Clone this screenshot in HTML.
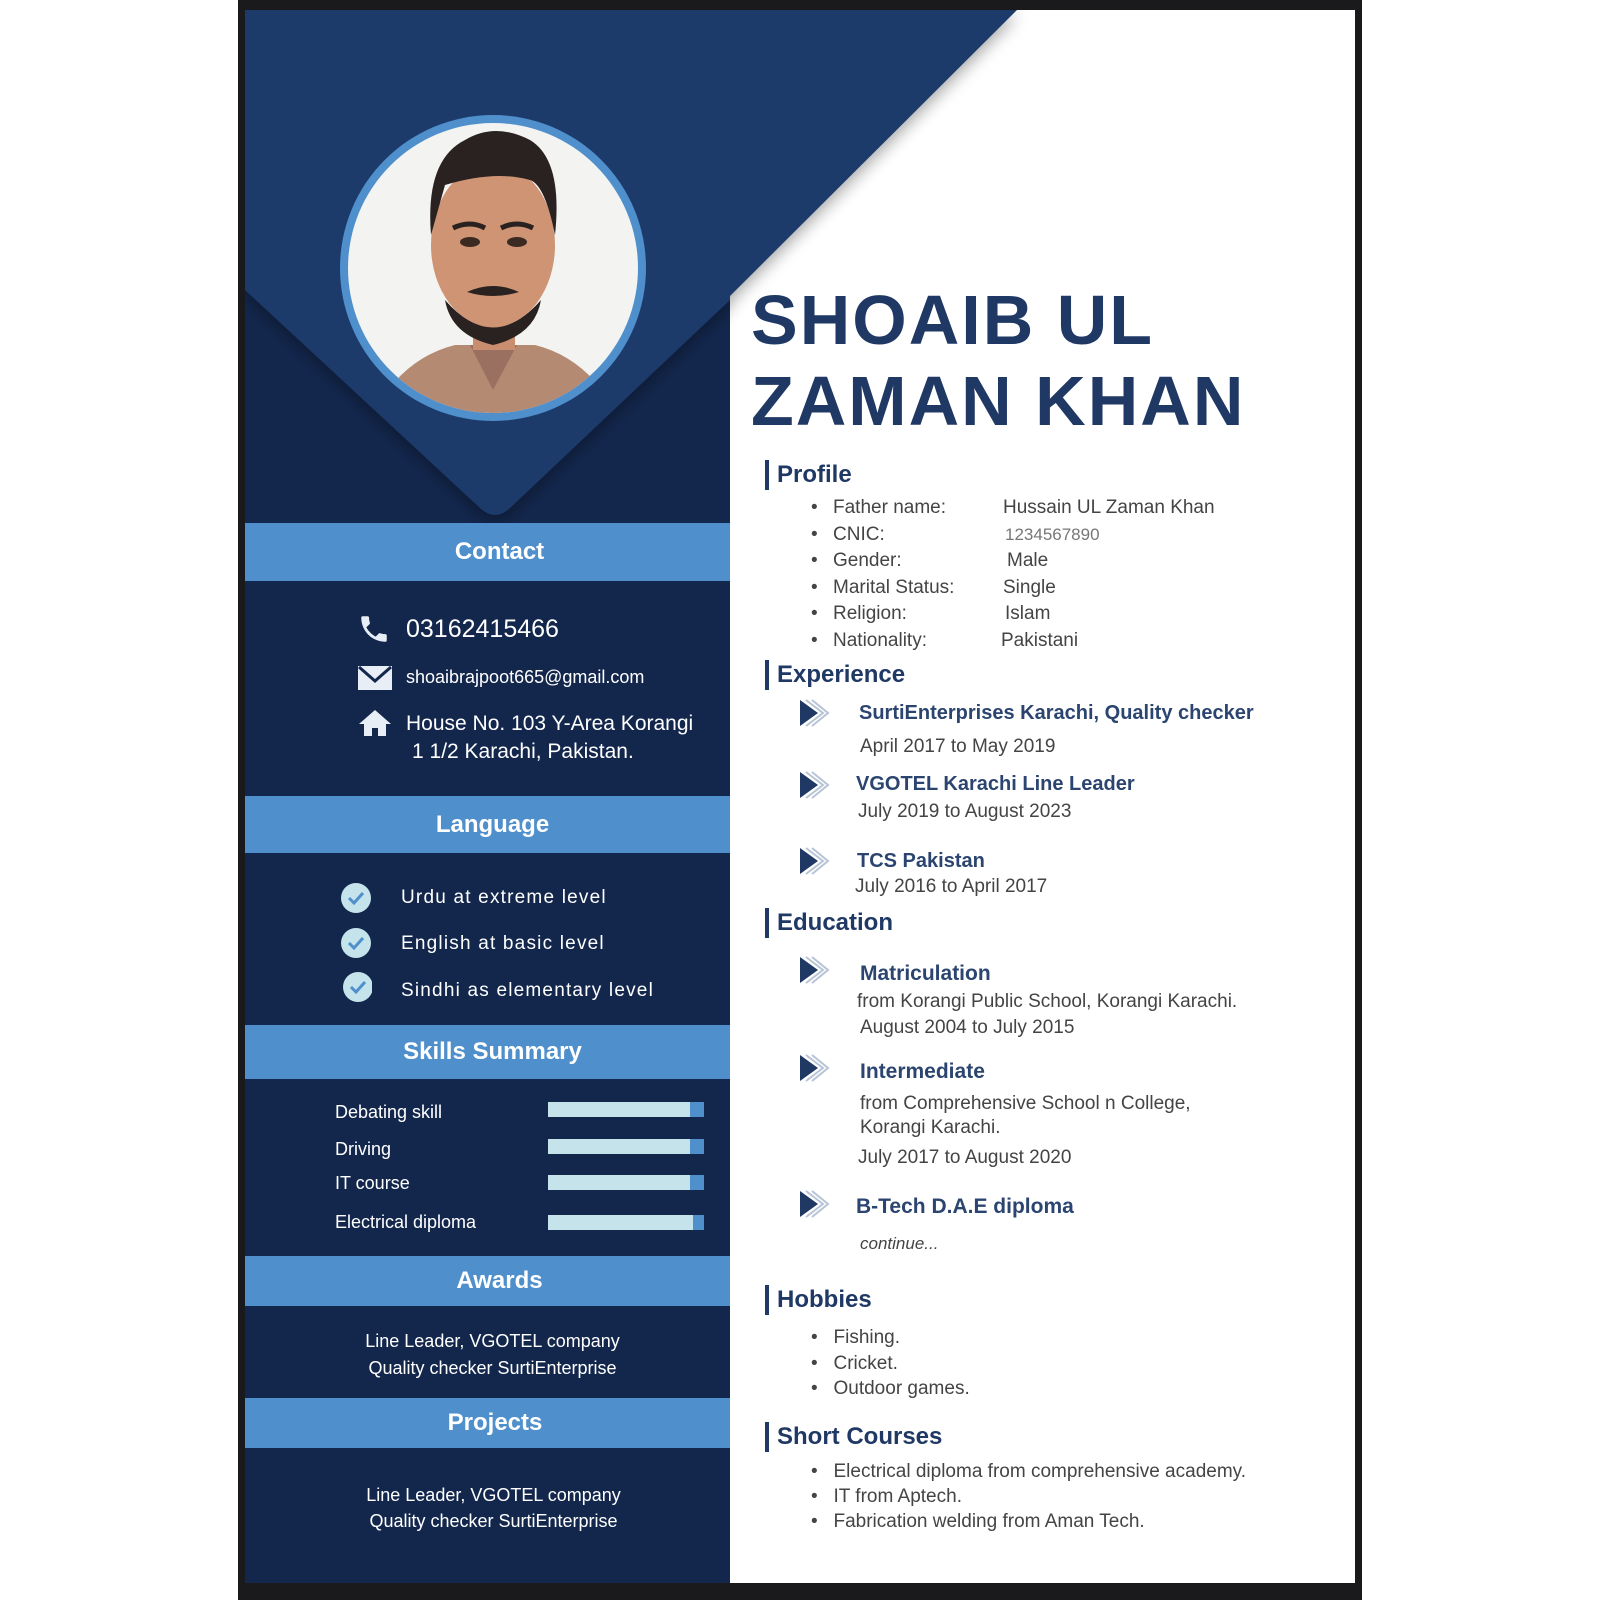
<!DOCTYPE html>
<html><head><meta charset="utf-8"><style>
*{margin:0;padding:0;box-sizing:border-box}
body{width:1600px;height:1600px;background:#fff;position:relative;overflow:hidden;font-family:"Liberation Sans",sans-serif}
.a{position:absolute;white-space:nowrap}
.bar{position:absolute;left:245px;width:485px;background:#4f8fcc;color:#fff;font-weight:bold;font-size:24px;display:flex;align-items:center;justify-content:center;padding-left:24px}
.lt{color:#fff}
.r{color:#444;font-size:19px}
.h{position:absolute;left:765px;font-weight:bold;font-size:24px;color:#1f3864;border-left:4px solid #1f3864;padding-left:8px;line-height:30px}
.t{color:#2b4570;font-weight:bold;font-size:20px}
.sk{position:absolute;left:548px;width:156px;height:15px;background:#c5e3ea;border-right:14px solid #4f8fcc}
</style></head><body>
<div class="a" style="left:238px;top:0;width:1124px;height:1600px;background:#1a1a1c"></div>
<div class="a" style="left:245px;top:10px;width:1110px;height:1573px;background:#fff"></div>
<svg class="a" style="left:245px;top:10px" width="1110" height="1573">
<defs><filter id="sh" x="-10%" y="-10%" width="120%" height="130%"><feDropShadow dx="0" dy="6" stdDeviation="8" flood-color="#000" flood-opacity="0.35"/></filter></defs>
<rect x="0" y="0" width="485" height="1573" fill="#13274d"/>
<path d="M0 0 L772 0 L485 286 L485 290 L265 498 Q250 512 235 498 L0 280 Z" fill="#1f3b6b" filter="url(#sh)"/>
<circle cx="248" cy="258" r="153" fill="#4f8fcc"/>
<clipPath id="c"><circle cx="248" cy="258" r="145"/></clipPath>
<g clip-path="url(#c)">
<rect x="90" y="100" width="320" height="320" fill="#f3f3f1"/>
<path d="M120 420 Q150 350 210 335 L290 335 Q350 350 380 420 Z" fill="#b58a72"/>
<path d="M225 335 L248 380 L272 335 Z" fill="#9a7060"/>
<rect x="228" y="290" width="42" height="50" fill="#c98e70"/>
<ellipse cx="248" cy="235" rx="62" ry="82" fill="#cf9474"/>
<path d="M186 225 Q180 150 220 130 Q250 112 285 130 Q318 150 310 225 Q300 175 285 170 Q250 160 200 175 Z" fill="#2a2220"/>
<path d="M200 290 Q248 345 296 290 Q290 325 248 335 Q206 325 200 290 Z" fill="#2a2220"/>
<path d="M222 282 Q248 270 274 282 Q248 290 222 282 Z" fill="#2a2220"/>
<ellipse cx="225" cy="232" rx="10" ry="5" fill="#3a2a22"/><ellipse cx="272" cy="232" rx="10" ry="5" fill="#3a2a22"/>
<path d="M208 218 Q225 210 240 218" stroke="#2a2220" stroke-width="5" fill="none"/><path d="M256 218 Q272 210 288 218" stroke="#2a2220" stroke-width="5" fill="none"/>
</g>
</svg>
<div class="bar" style="top:523px;height:58px">Contact</div>
<div class="bar" style="top:796px;height:57px;padding-left:10px">Language</div>
<div class="bar" style="top:1025px;height:54px;padding-left:10px">Skills Summary</div>
<div class="bar" style="top:1256px;height:50px">Awards</div>
<div class="bar" style="top:1398px;height:50px;padding-left:15px">Projects</div>
<svg class="a" style="left:357px;top:612px" width="34" height="34" viewBox="0 0 24 24"><path fill="#e8eef5" d="M6.6 10.8c1.4 2.8 3.8 5.1 6.6 6.6l2.2-2.2c.3-.3.7-.4 1-.2 1.1.4 2.3.6 3.6.6.6 0 1 .4 1 1V20c0 .6-.4 1-1 1C10.6 21 3 13.4 3 4c0-.6.4-1 1-1h3.5c.6 0 1 .4 1 1 0 1.3.2 2.5.6 3.6.1.3 0 .7-.2 1L6.6 10.8z"/></svg>
<div class="a lt" style="left:406px;top:615px;font-size:25px">03162415466</div>
<svg class="a" style="left:358px;top:666px" width="34" height="24"><rect x="0" y="0" width="34" height="24" fill="#e8eef5"/><path d="M1 1 L17 15 L33 1" stroke="#13274d" stroke-width="3" fill="none"/></svg>
<div class="a lt" style="left:406px;top:667px;font-size:18px">shoaibrajpoot665@gmail.com</div>
<svg class="a" style="left:358px;top:709px" width="34" height="28"><path d="M17 1 L1 15 L6 15 L6 27 L14 27 L14 19 L20 19 L20 27 L28 27 L28 15 L33 15 Z" fill="#e8eef5"/></svg>
<div class="a lt" style="left:406px;top:712px;font-size:21px">House No. 103 Y-Area Korangi</div>
<div class="a lt" style="left:412px;top:740px;font-size:21px">1 1/2 Karachi, Pakistan.</div>
<svg class="a" style="left:340px;top:882px" width="32" height="120">
<g><circle cx="16" cy="16" r="15" fill="#c5e3ea"/><path d="M9 16 L14 21 L23 11" stroke="#4f8fcc" stroke-width="3" fill="none"/></g>
<g transform="translate(0,45)"><circle cx="16" cy="16" r="15" fill="#c5e3ea"/><path d="M9 16 L14 21 L23 11" stroke="#4f8fcc" stroke-width="3" fill="none"/></g>
<g transform="translate(2,89)"><circle cx="16" cy="16" r="15" fill="#c5e3ea"/><path d="M9 16 L14 21 L23 11" stroke="#4f8fcc" stroke-width="3" fill="none"/></g>
</svg>
<div class="a lt" style="left:401px;top:887px;font-size:19px;letter-spacing:1.2px">Urdu at extreme level</div>
<div class="a lt" style="left:401px;top:933px;font-size:19px;letter-spacing:1.2px">English at basic level</div>
<div class="a lt" style="left:401px;top:980px;font-size:19px;letter-spacing:1.2px">Sindhi as elementary level</div>
<div class="a lt" style="left:335px;top:1102px;font-size:18px">Debating skill</div>
<div class="a lt" style="left:335px;top:1139px;font-size:18px">Driving</div>
<div class="a lt" style="left:335px;top:1173px;font-size:18px">IT course</div>
<div class="a lt" style="left:335px;top:1212px;font-size:18px">Electrical diploma</div>
<div class="sk" style="top:1102px"></div><div class="sk" style="top:1139px"></div><div class="sk" style="top:1175px"></div><div class="sk" style="top:1215px;border-right-width:11px"></div>
<div class="a lt" style="left:245px;width:485px;text-align:center;top:1328px;font-size:18px;line-height:27px;padding-left:10px">Line Leader, VGOTEL company<br>Quality checker SurtiEnterprise</div>
<div class="a lt" style="left:245px;width:485px;text-align:center;top:1482px;font-size:18px;line-height:26px;padding-left:12px">Line Leader, VGOTEL company<br>Quality checker SurtiEnterprise</div>
<div class="a" style="left:751px;top:280px;font-size:70px;font-weight:bold;color:#1f3864;line-height:81px;letter-spacing:2px">SHOAIB UL<br>ZAMAN KHAN</div>
<div class="h" style="top:460px">Profile</div>
<div class="a r" style="left:811px;top:495px;line-height:26.5px">
<div style="display:flex"><span style="width:22px">•</span><span style="width:170px">Father name:</span>Hussain UL Zaman Khan</div>
<div style="display:flex"><span style="width:22px">•</span><span style="width:172px">CNIC:</span><span style="font-size:17px;color:#777">1234567890</span></div>
<div style="display:flex"><span style="width:22px">•</span><span style="width:174px">Gender:</span>Male</div>
<div style="display:flex"><span style="width:22px">•</span><span style="width:170px">Marital Status:</span>Single</div>
<div style="display:flex"><span style="width:22px">•</span><span style="width:172px">Religion:</span>Islam</div>
<div style="display:flex"><span style="width:22px">•</span><span style="width:168px">Nationality:</span>Pakistani</div>
</div>
<div class="h" style="top:660px">Experience</div>
<svg width="0" height="0" style="position:absolute"><defs><g id="ar"><path d="M12 2 L28 15 L12 28" stroke="#b8c4d6" stroke-width="2" fill="none"/><path d="M6 2 L23 15 L6 28" stroke="#b8c4d6" stroke-width="2" fill="none"/><path d="M0 2 L18 15 L0 28 Z" fill="#1f3864"/></g></defs></svg>
<svg class="a" style="left:800px;top:698px" width="34" height="32"><use href="#ar"/></svg>
<div class="a t" style="left:859px;top:702px">SurtiEnterprises Karachi, Quality checker</div>
<div class="a r" style="left:860px;top:736px">April 2017 to May 2019</div>
<svg class="a" style="left:800px;top:770px" width="34" height="32"><use href="#ar"/></svg>
<div class="a t" style="left:856px;top:773px">VGOTEL Karachi Line Leader</div>
<div class="a r" style="left:858px;top:801px">July 2019 to August 2023</div>
<svg class="a" style="left:800px;top:846px" width="34" height="32"><use href="#ar"/></svg>
<div class="a t" style="left:857px;top:850px">TCS Pakistan</div>
<div class="a r" style="left:855px;top:876px">July 2016 to April 2017</div>
<div class="h" style="top:908px">Education</div>
<svg class="a" style="left:800px;top:955px" width="34" height="32"><use href="#ar"/></svg>
<div class="a t" style="left:860px;top:962px;font-size:21px">Matriculation</div>
<div class="a r" style="left:857px;top:991px">from Korangi Public School, Korangi Karachi.</div>
<div class="a r" style="left:860px;top:1017px">August 2004 to July 2015</div>
<svg class="a" style="left:800px;top:1053px" width="34" height="32"><use href="#ar"/></svg>
<div class="a t" style="left:860px;top:1060px;font-size:21px">Intermediate</div>
<div class="a r" style="left:860px;top:1093px">from Comprehensive School n College,</div>
<div class="a r" style="left:860px;top:1117px">Korangi Karachi.</div>
<div class="a r" style="left:858px;top:1147px">July 2017 to August 2020</div>
<svg class="a" style="left:800px;top:1189px" width="34" height="32"><use href="#ar"/></svg>
<div class="a t" style="left:856px;top:1195px;font-size:21px">B-Tech D.A.E diploma</div>
<div class="a r" style="left:860px;top:1234px;font-style:italic;font-size:17px">continue...</div>
<div class="h" style="top:1285px">Hobbies</div>
<div class="a r" style="left:811px;top:1325px;line-height:25.5px">
<div>•&nbsp;&nbsp; Fishing.</div><div>•&nbsp;&nbsp; Cricket.</div><div>•&nbsp;&nbsp; Outdoor games.</div></div>
<div class="h" style="top:1422px">Short Courses</div>
<div class="a r" style="left:811px;top:1459px;line-height:25px">
<div>•&nbsp;&nbsp; Electrical diploma from comprehensive academy.</div><div>•&nbsp;&nbsp; IT from Aptech.</div><div>•&nbsp;&nbsp; Fabrication welding from Aman Tech.</div></div>
</body></html>
